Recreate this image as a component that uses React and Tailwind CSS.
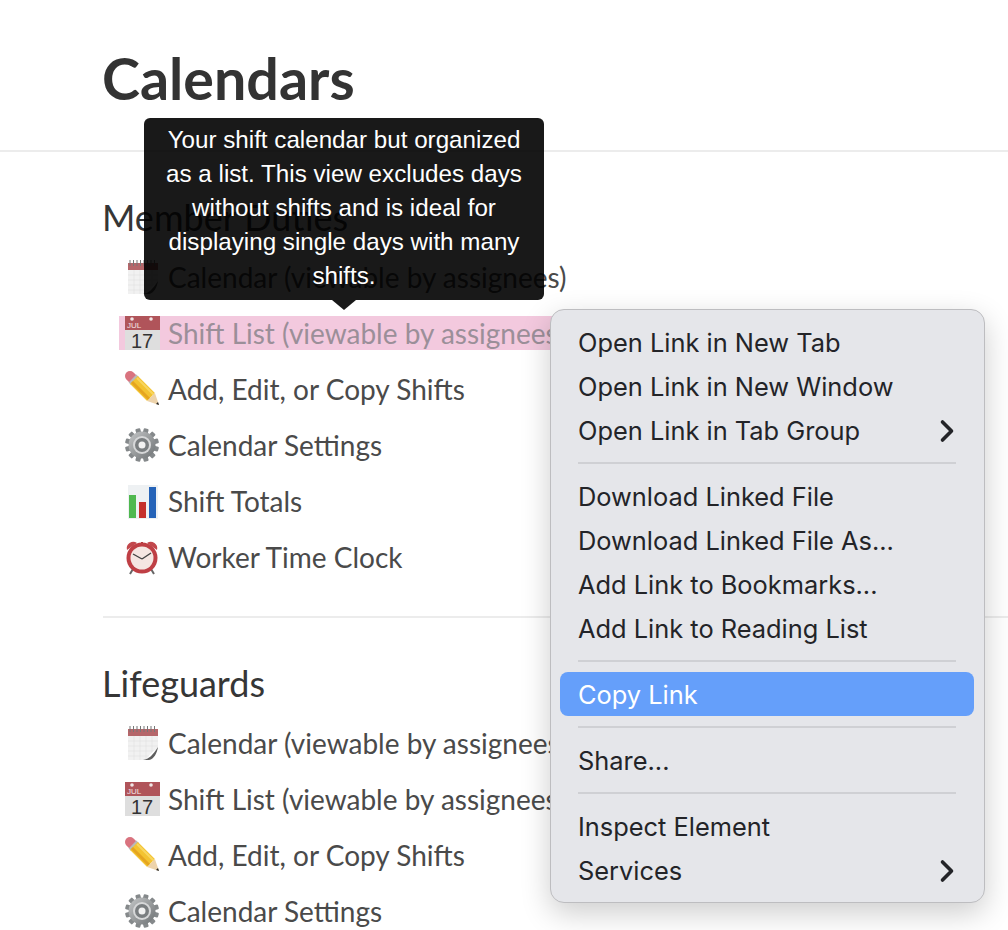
import { ChevronRight } from "lucide-react";

function CalendarPadIcon() {
  return (
    <svg viewBox="0 0 36 36" className="w-9 h-9">
      <rect x="4" y="5" width="30" height="30" fill="#f1f1f1" />
      <rect x="4" y="4" width="30" height="7" fill="#b5666a" />
      <g stroke="#777" strokeWidth="1">
        <path d="M6 1v6M9.500 1v6M13 1v6M16.500 1v6M20 1v6M23.500 1v6M27 1v6M30.500 1v6" />
      </g>
      <g stroke="#e2e2e2" strokeWidth="0.7">
        <path d="M4 16h30M4 21h30M4 26h30M4 31h30M10 11v24M16 11v24M22 11v24M28 11v24" />
      </g>
      <path d="M22 35c4-6 7-9 12-12v12z" fill="#ffffff" />
      <path d="M19 35c6-1 10-5 15-13-1 6-4 12-9 13z" fill="#5f5f5f" />
    </svg>
  );
}

function DayCalendarIcon() {
  return (
    <svg viewBox="0 0 36 36" className="w-9 h-9">
      <rect x="1" y="1" width="35" height="14" fill="#b0545a" />
      <rect x="1" y="15" width="35" height="20" fill="#dedede" />
      <circle cx="8" cy="4" r="1.800" fill="#f0e6e6" />
      <circle cx="27" cy="4" r="1.800" fill="#f0e6e6" />
      <text x="3" y="13" fontSize="8" fill="#f4e4e4" fontFamily="Liberation Sans, sans-serif">JUL</text>
      <text x="18" y="32.500" fontSize="20" fill="#333" textAnchor="middle" fontFamily="Liberation Sans, sans-serif">17</text>
    </svg>
  );
}

function PencilIcon() {
  return (
    <svg viewBox="0 0 36 36" className="w-9 h-9">
      <path d="M6 5l3 3" stroke="#d9737f" strokeWidth="10" strokeLinecap="round" />
      <path d="M8.500 7.500l2.500 2.500" stroke="#b9b9b9" strokeWidth="11" />
      <path d="M10 9l17 17" stroke="#f3c330" strokeWidth="11" />
      <path d="M8 11l17 17" stroke="#e5a51f" strokeWidth="3" />
      <path d="M13 7l17 17" stroke="#f8d660" strokeWidth="2" />
      <path d="M30.900 22.100L23.100 29.900 35 34z" fill="#edd3ab" />
      <path d="M34 31l-2 2 3 1z" fill="#222" />
    </svg>
  );
}

function GearIcon() {
  const teeth = [0, 30, 60, 90, 120, 150];
  return (
    <svg viewBox="0 0 36 36" className="w-9 h-9">
      <defs>
        <linearGradient id="gearBody" x1="0" y1="0" x2="1" y2="1">
          <stop offset="0" stopColor="#c4c6c7" />
          <stop offset="1" stopColor="#6e7274" />
        </linearGradient>
      </defs>
      {teeth.map((deg) => (
        <rect key={deg} x="15.500" y="1" width="5" height="34" rx="1" fill="#85898b" transform={`rotate(${deg + 15} 18 18)`} />
      ))}
      <circle cx="18" cy="18" r="13.500" fill="url(#gearBody)" />
      <circle cx="18" cy="18" r="9" fill="#d6d7d8" />
      <circle cx="18" cy="18" r="7" fill="#7a7e80" />
      <circle cx="18" cy="18" r="3.500" fill="#f1f1f1" />
    </svg>
  );
}

function ChartIcon() {
  return (
    <svg viewBox="0 0 36 36" className="w-9 h-9">
      <rect x="4" y="2" width="30" height="34" fill="#eef1f3" />
      <rect x="5" y="12" width="7" height="23" fill="#4fb84f" />
      <rect x="15" y="19" width="7" height="16" fill="#c5302b" />
      <rect x="25" y="4" width="7" height="31" fill="#2563b8" />
    </svg>
  );
}

function ClockIcon() {
  return (
    <svg viewBox="0 0 36 36" className="w-9 h-9">
      <path d="M3 11a6.500 6.500 0 0 1 10-7z" fill="#c2474c" />
      <path d="M33 11a6.500 6.500 0 0 0-10-7z" fill="#c2474c" />
      <path d="M17 3h2v4h-2z" fill="#a33" />
      <path d="M9 30l-3 5M27 30l3 5" stroke="#666" strokeWidth="2" />
      <circle cx="18" cy="19" r="15.500" fill="#bf3f45" />
      <circle cx="18" cy="19" r="11.500" fill="#f5e6e2" />
      <path d="M18 20L9 15M18 20l9-6" stroke="#444" strokeWidth="1.400" fill="none" />
    </svg>
  );
}

const memberRows = [
  { icon: <CalendarPadIcon />, label: "Calendar (viewable by assignees)" },
  { icon: <DayCalendarIcon />, label: "Shift List (viewable by assignees)", active: true },
  { icon: <PencilIcon />, label: "Add, Edit, or Copy Shifts" },
  { icon: <GearIcon />, label: "Calendar Settings" },
  { icon: <ChartIcon />, label: "Shift Totals" },
  { icon: <ClockIcon />, label: "Worker Time Clock" },
];

const lifeguardRows = [
  { icon: <CalendarPadIcon />, label: "Calendar (viewable by assignees)" },
  { icon: <DayCalendarIcon />, label: "Shift List (viewable by assignees)" },
  { icon: <PencilIcon />, label: "Add, Edit, or Copy Shifts" },
  { icon: <GearIcon />, label: "Calendar Settings" },
];

function LinkRow({ icon, label, active }) {
  return (
    <li className="h-14 flex items-center">
      <a
        className={`h-[34px] w-fit flex items-center gap-2 pl-[5px] text-[28px] whitespace-nowrap ${
          active ? "bg-[#f3c9de] text-[#9b8f99]" : "text-[#4a4a4a]"
        }`}
      >
        {icon}
        <span>{label}</span>
      </a>
    </li>
  );
}

function MenuItem({ label, submenu, selected }) {
  return (
    <div
      className={`h-11 flex items-center justify-between px-[18px] pt-0.5 rounded-lg text-[25.4px] ${
        selected ? "bg-[#659ffa] text-white" : "text-[#232428]"
      }`}
    >
      <span>{label}</span>
      {submenu && <ChevronRight size={36} strokeWidth={2.4} className="text-[#232428] -mr-[9px] -my-1" />}
    </div>
  );
}

function MenuSeparator() {
  return <div className="h-0.5 my-[10px] mx-[18px] bg-[#cfd0d4]" />;
}

export default function App() {
  return (
    <div className="relative h-[930px] overflow-hidden bg-white font-['Lato',sans-serif]">
      <header className="h-[152px] border-b-2 border-[#ececec] pl-[102px] pt-[38px]">
        <h1 className="text-[57.4px] leading-[80px] font-bold text-[#333333]">Calendars</h1>
      </header>

      <main className="pl-[103px]">
        <section className="h-[466px] pt-[43px] border-b-2 border-[#ececec]">
          <h2 className="-ml-px text-[36px] leading-[44px] text-[#363636]">Member Duties</h2>
          <ul className="mt-[10px] pl-[16px]">
            {memberRows.map((row) => (
              <LinkRow key={row.label} {...row} />
            ))}
          </ul>
        </section>

        <section className="pt-[43px]">
          <h2 className="-ml-px text-[36px] leading-[44px] text-[#363636]">Lifeguards</h2>
          <ul className="mt-[10px] pl-[16px]">
            {lifeguardRows.map((row) => (
              <LinkRow key={row.label} {...row} />
            ))}
          </ul>
        </section>
      </main>

      {/* Tooltip */}
      <div className="absolute left-[144px] top-[118px] w-[400px] h-[182px] rounded-md bg-black/90 py-[5px] px-[10px] text-center text-[24.2px] leading-[34px] text-white font-['Liberation_Sans',sans-serif]">
        Your shift calendar but organized as a list. This view excludes days without shifts and is ideal for displaying
        single days with many shifts.
        <div className="absolute left-1/2 top-full -ml-3 w-0 h-0 border-x-[12px] border-x-transparent border-t-[10px] border-t-black/90" />
      </div>

      {/* Context menu */}
      <div className="absolute left-[550px] top-[309px] w-[435px] h-[594px] rounded-[14px] border border-[#bdbdc0] bg-[#e5e6ea] pl-[9px] pr-[10px] pt-[10px] shadow-[0_10px_30px_rgba(0,0,0,0.2)] font-['Inter',sans-serif]">
        <MenuItem label="Open Link in New Tab" />
        <MenuItem label="Open Link in New Window" />
        <MenuItem label="Open Link in Tab Group" submenu />
        <MenuSeparator />
        <MenuItem label="Download Linked File" />
        <MenuItem label="Download Linked File As..." />
        <MenuItem label="Add Link to Bookmarks..." />
        <MenuItem label="Add Link to Reading List" />
        <MenuSeparator />
        <MenuItem label="Copy Link" selected />
        <MenuSeparator />
        <MenuItem label="Share..." />
        <MenuSeparator />
        <MenuItem label="Inspect Element" />
        <MenuItem label="Services" submenu />
      </div>
    </div>
  );
}
